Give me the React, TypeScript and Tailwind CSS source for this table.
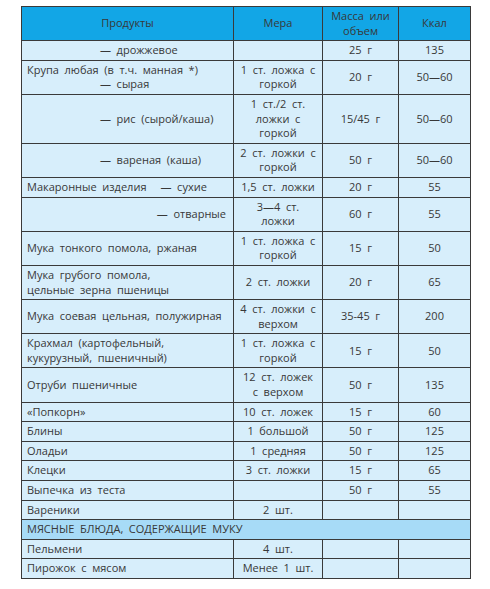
import React from 'react'

type Row = {
  name: React.ReactNode
  measure?: React.ReactNode
  mass?: string
  kcal?: string
  right?: boolean
}

const rows: Row[] = [
  { name: <span className="pl-[73px]">— дрожжевое</span>, mass: '25 г', kcal: '135' },
  {
    name: (
      <>
        Крупа любая (в т.ч. манная *)
        <br />
        <span className="pl-[73px]">— сырая</span>
      </>
    ),
    measure: <>1 ст. ложка с<br />горкой</>,
    mass: '20 г',
    kcal: '50—60',
  },
  {
    name: <span className="pl-[73px]">— рис (сырой/каша)</span>,
    measure: <>1 ст./2 ст.<br />ложки с<br />горкой</>,
    mass: '15/45 г',
    kcal: '50—60',
  },
  {
    name: <span className="pl-[73px]">— вареная (каша)</span>,
    measure: <>2 ст. ложки с<br />горкой</>,
    mass: '50 г',
    kcal: '50—60',
  },
  {
    name: (
      <>
        Макаронные изделия<span className="inline-block w-[14px]" />— сухие
      </>
    ),
    measure: '1,5 ст. ложки',
    mass: '20 г',
    kcal: '55',
  },
  {
    name: '— отварные',
    right: true,
    measure: <>3—4 ст.<br />ложки</>,
    mass: '60 г',
    kcal: '55',
  },
  {
    name: 'Мука тонкого помола, ржаная',
    measure: <>1 ст. ложка с<br />горкой</>,
    mass: '15 г',
    kcal: '50',
  },
  {
    name: <>Мука грубого помола,<br />цельные зерна пшеницы</>,
    measure: '2 ст. ложки',
    mass: '20 г',
    kcal: '65',
  },
  {
    name: 'Мука соевая цельная, полужирная',
    measure: <>4 ст. ложки с<br />верхом</>,
    mass: '35-45 г',
    kcal: '200',
  },
  {
    name: <>Крахмал (картофельный,<br />кукурузный, пшеничный)</>,
    measure: <>1 ст. ложка с<br />горкой</>,
    mass: '15 г',
    kcal: '50',
  },
  {
    name: 'Отруби пшеничные',
    measure: <>12 ст. ложек<br />с верхом</>,
    mass: '50 г',
    kcal: '135',
  },
  { name: '«Попкорн»', measure: '10 ст. ложек', mass: '15 г', kcal: '60' },
  { name: 'Блины', measure: '1 большой', mass: '50 г', kcal: '125' },
  { name: 'Оладьи', measure: '1 средняя', mass: '50 г', kcal: '125' },
  { name: 'Клецки', measure: '3 ст. ложки', mass: '15 г', kcal: '65' },
  { name: 'Выпечка из теста', mass: '50 г', kcal: '55' },
  { name: 'Вареники', measure: '2 шт.' },
]

const meatRows: Row[] = [
  { name: 'Пельмени', measure: '4 шт.' },
  { name: 'Пирожок с мясом', measure: 'Менее 1 шт.' },
]

const cell = 'border border-[#3a3a3a] py-[2px] align-middle'

function DataRow({ row }: { row: Row }) {
  return (
    <tr className="bg-[#d7eefb]">
      <td className={`${cell} whitespace-nowrap px-[5px] ${row.right ? 'pr-[7px] text-right' : 'text-left'}`}>
        {row.name}
      </td>
      <td className={`${cell} px-0 text-center whitespace-nowrap`}>{row.measure}</td>
      <td className={`${cell} px-0 text-center whitespace-nowrap`}>{row.mass}</td>
      <td className={`${cell} px-0 text-center whitespace-nowrap`}>{row.kcal}</td>
    </tr>
  )
}

export default function App() {
  return (
    <main className="min-h-[589px] w-[490px] bg-white pt-[6px] pl-[21px]">
      <table
        className="w-[449px] table-fixed border-collapse text-[11px] leading-[14.6px] text-[#383838] [word-spacing:0.25em]"
        style={{ fontFamily: '"Open Sans", "Noto Sans", sans-serif' }}
      >
        <colgroup>
          <col className="w-[212px]" />
          <col className="w-[89px]" />
          <col className="w-[76px]" />
          <col className="w-[72px]" />
        </colgroup>
        <thead>
          <tr className="bg-[#12a6e6]">
            <th className={`${cell} font-normal text-center`}>Продукты</th>
            <th className={`${cell} font-normal text-center`}>Мера</th>
            <th className={`${cell} font-normal text-center`}>
              Масса или
              <br />
              объем
            </th>
            <th className={`${cell} font-normal text-center`}>Ккал</th>
          </tr>
        </thead>
        <tbody>
          {rows.map((r, i) => (
            <DataRow key={i} row={r} />
          ))}
          <tr className="bg-[#a7dbf7]">
            <td colSpan={4} className={`${cell} px-[5px] text-left`}>
              МЯСНЫЕ БЛЮДА, СОДЕРЖАЩИЕ МУКУ
            </td>
          </tr>
          {meatRows.map((r, i) => (
            <DataRow key={i} row={r} />
          ))}
        </tbody>
      </table>
    </main>
  )
}
